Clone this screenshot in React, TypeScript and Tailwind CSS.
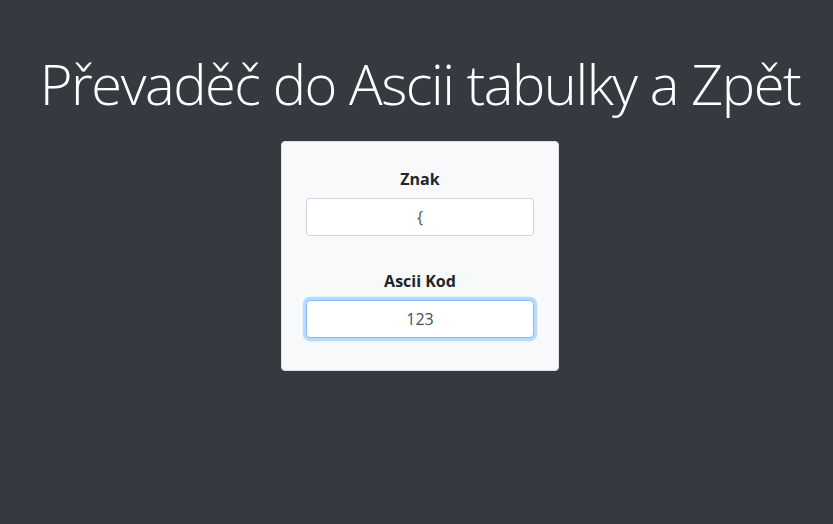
import React, { useState } from 'react';

const App: React.FC = () => {
  const [znak, setZnak] = useState('{');
  const [kod, setKod] = useState('123');

  const onZnak = (v: string) => {
    setZnak(v);
    if (v.length > 0) setKod(String(v.charCodeAt(0)));
  };

  const onKod = (v: string) => {
    setKod(v);
    const n = parseInt(v, 10);
    if (!isNaN(n)) setZnak(String.fromCharCode(n));
  };

  return (
    <div
      className="min-h-screen bg-[#343a40] pt-[50px] text-[#212529]"
      style={{ fontFamily: '"Open Sans", "Noto Sans", sans-serif' }}
    >
      {/* Nadpis */}
      <h1 className="ml-[7px] text-center text-[56px] font-light leading-[1.2] text-white tracking-[-1.45px]">
        Převaděč do Ascii tabulky a Zpět
      </h1>

      <div className="mt-[24px] flex justify-center">
        <div className="ml-[7px] w-[278px] rounded-[4px] border border-[#dfe2e6] bg-[#f8f9fa] px-6 pt-[25px] pb-8">
          <div className="mb-[33px] flex flex-col items-center">
            <label className="mb-[7px] text-[16px] font-bold leading-6">Znak</label>
            <input
              type="text"
              value={znak}
              onChange={(e) => onZnak(e.target.value)}
              className="h-[38px] w-full rounded-[4px] border border-[#ced4da] bg-white px-3 text-center text-[16px] text-[#495057] outline-none"
            />
          </div>
          <div className="flex flex-col items-center">
            <label className="mb-[7px] text-[16px] font-bold leading-6">Ascii Kod</label>
            <input
              type="text"
              value={kod}
              onChange={(e) => onKod(e.target.value)}
              className="h-[38px] w-full rounded-[4px] border border-[#80bdff] bg-white px-3 text-center text-[16px] text-[#495057] outline-none shadow-[0_0_0_3.2px_rgba(0,123,255,0.25)]"
            />
          </div>
        </div>
      </div>
    </div>
  );
};

export default App;
